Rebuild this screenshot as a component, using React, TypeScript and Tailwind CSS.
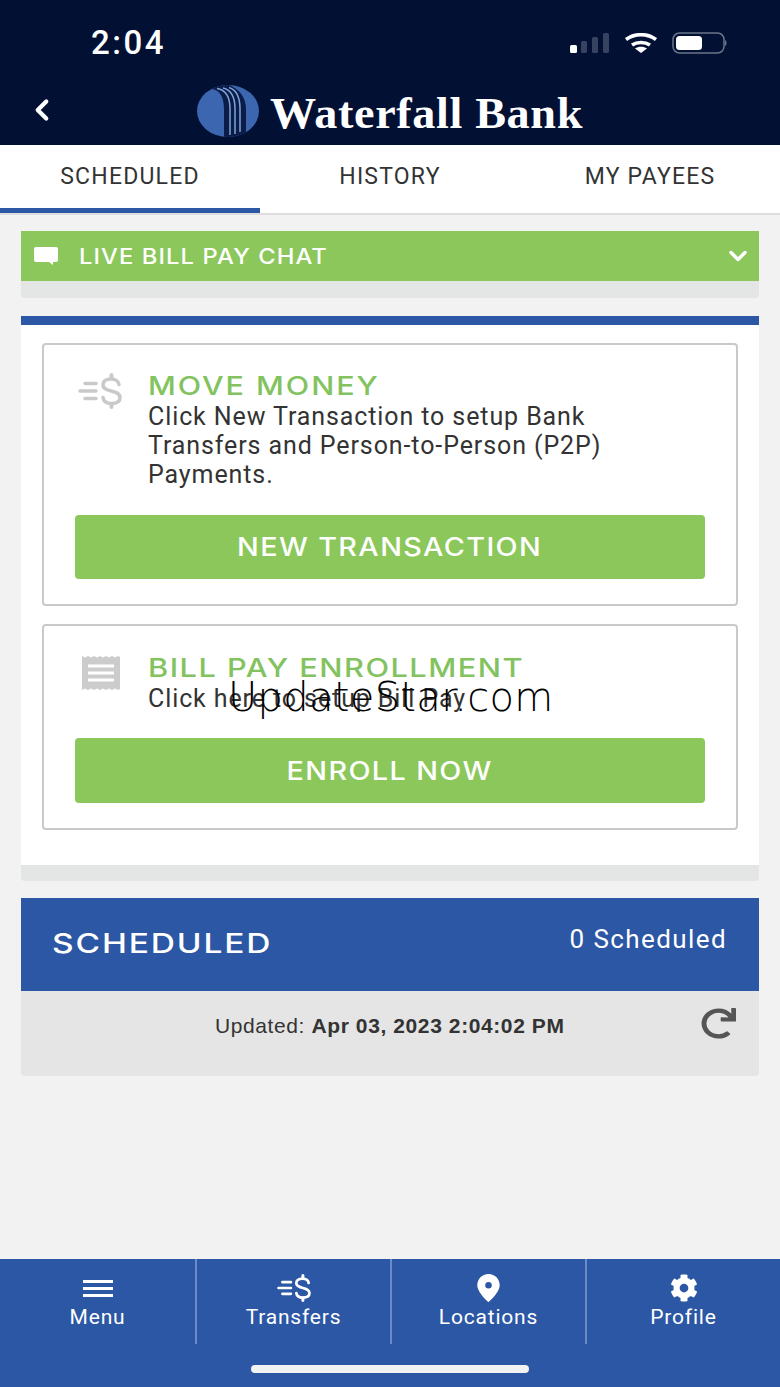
import { ChevronDown, ChevronLeft } from "lucide-react";
import { FaCog, FaRedo } from "react-icons/fa";

function TransferIcon({ className }: { className: string }) {
  return (
    <svg viewBox="0 0 44 36" className={className} fill="none" stroke="currentColor" strokeLinecap="round">
      <path d="M2 18h16M7 10.500h11M7 25.500h11" strokeWidth="3.500" />
      <path d="M41 11.500C40.500 8 37 6 33 6c-4.500 0-8 2-8 6 0 8 17 4 17 12.500 0 4-3.500 6-8.500 6-4.500 0-8-2-8.500-6" strokeWidth="3.500" />
      <path d="M33.500 2v3M33.500 31v3" strokeWidth="4" />
    </svg>
  );
}

function Logo() {
  return (
    <svg viewBox="0 0 62 52" className="h-[52px] w-[62px]">
      <defs>
        <clipPath id="logo-clip">
          <ellipse cx="31" cy="26" rx="31" ry="26" />
        </clipPath>
      </defs>
      <ellipse cx="31" cy="26" rx="31" ry="26" fill="#3c66b0" />
      <g clipPath="url(#logo-clip)" fill="none">
        <path d="M13 4C24 4 27 14 27 24v28h22V24C49 12 42 4 32 0H18Z" fill="#0b1c49" />
        <path d="M20 3.500C30 5 33 14 33 24v26M26 3C35 5 38 14 38 24v25M32 2.500C40 5 43 14 43 24v23" stroke="#7fa3d8" strokeWidth="1.500" />
      </g>
    </svg>
  );
}

function ActionCard({
  icon,
  title,
  lines,
  button,
  cardClass,
  bodyClass,
  titleClass,
  buttonClass,
}: {
  icon: React.ReactNode;
  title: string;
  lines: string[];
  button: string;
  cardClass: string;
  bodyClass: string;
  titleClass: string;
  buttonClass: string;
}) {
  return (
    <div className={`rounded border-2 border-[#c9c9c9] bg-white px-[31px] ${cardClass}`}>
      <div className={`flex ${bodyClass}`}>
        <div className="flex w-[73px] shrink-0">{icon}</div>
        <div className="min-w-0">
          <div
            className={`h-[28px] origin-left whitespace-nowrap text-[25px] leading-[28px] font-medium text-[#83c35f] [font-family:'Inter',sans-serif] ${titleClass}`}
          >
            {title}
          </div>
          <div className="pt-[2px]">
            {lines.map((line) => (
              <div key={line} className="h-[29px] whitespace-nowrap text-[25px] leading-[29px] tracking-[0.9px] text-[#333333]">
                {line}
              </div>
            ))}
          </div>
        </div>
      </div>
      <button className={`flex w-full items-center justify-center rounded bg-[#8bc75a] pt-[2px] text-white ${buttonClass}`}>
        <span className="scale-x-[1.15] whitespace-nowrap text-[25px] font-medium tracking-[1.2px] [font-family:'Inter',sans-serif]">
          {button}
        </span>
      </button>
    </div>
  );
}

export default function App() {
  const tabs = ["SCHEDULED", "HISTORY", "MY PAYEES"];

  return (
    <div className="relative flex h-[1387px] w-[780px] flex-col overflow-hidden bg-[#f2f2f2] [font-family:'Roboto',sans-serif]">
      <header className="h-[145px] shrink-0 bg-[#021033] text-white">
        <div className="flex h-[85px] items-start justify-between pl-[91px] pr-[53px] pt-[24px]">
          <span className="text-[33px] leading-[38px] font-medium tracking-[2.5px]">2:04</span>
          <div className="flex items-start pt-[9px]">
            <svg viewBox="0 0 39 20" className="h-[20px] w-[39px]">
              <rect x="0" y="12" width="7" height="8" rx="1.500" fill="#ffffff" />
              <rect x="11" y="8" width="6" height="12" rx="1.500" fill="#36425f" />
              <rect x="22" y="4" width="6" height="16" rx="1.500" fill="#36425f" />
              <rect x="33" y="0" width="6" height="20" rx="1.500" fill="#36425f" />
            </svg>
            <svg viewBox="0 0 34 20" className="ml-[15px] h-[20px] w-[34px]" fill="none" stroke="#ffffff" strokeWidth="3.500">
              <path d="M2 6.500c8.500-6.500 21.500-6.500 30 0" />
              <path d="M8 12c5-3.500 13-3.500 18 0" />
              <path d="M17 20l-6-4.500c3.500-2.500 8.500-2.500 12 0Z" fill="#ffffff" stroke="none" />
            </svg>
            <svg viewBox="0 0 55 22" className="ml-[14px] -mt-[1px] h-[22px] w-[55px]">
              <rect x="1" y="1" width="51" height="20" rx="6.500" fill="none" stroke="#6a7489" strokeWidth="1.500" />
              <rect x="4" y="4" width="26" height="14" rx="3.500" fill="#ffffff" />
              <path d="M53 8c2 .5 2 5.500 0 6Z" fill="#6a7489" />
            </svg>
          </div>
        </div>
        <div className="flex h-[60px] items-start">
          <ChevronLeft className="ml-[25px] mt-[8px] h-[34px] w-[34px]" strokeWidth={3} />
          <div className="ml-[138px] flex items-start">
            <Logo />
            <span className="ml-[11px] mt-[4px] origin-left scale-x-[1.05] whitespace-nowrap text-[44px] leading-[50px] font-bold tracking-[0.6px] [font-family:'Liberation_Serif',serif]">
              Waterfall Bank
            </span>
          </div>
        </div>
      </header>

      <nav className="flex h-[70px] shrink-0 border-b-2 border-[#dedede] bg-white">
        {tabs.map((tab, i) => (
          <div
            key={tab}
            className={`flex flex-1 items-center justify-center pb-[4px] text-[23px] tracking-[1.2px] text-[#333333] ${
              i === 0 ? "border-b-[5px] border-[#2c57a4] pt-[5px]" : ""
            }`}
          >
            {tab}
          </div>
        ))}
      </nav>

      <main className="flex flex-1 flex-col px-[21px] pt-[16px]">
        <div className="overflow-hidden rounded-b bg-[#e4e5e5] pb-[17px]">
          <div className="flex h-[50px] items-center bg-[#8bc75a] pl-[12px] pr-[7px] text-white">
            <svg viewBox="0 0 26 20" className="h-[20px] w-[26px]">
              <path d="M3 1h20a2 2 0 0 1 2 2v11a2 2 0 0 1-2 2h-3v3l-4-3H3a2 2 0 0 1-2-2V3a2 2 0 0 1 2-2Z" fill="#ffffff" />
            </svg>
            <span className="ml-[20px] flex-1 origin-left scale-x-[1.08] text-[22px] font-medium tracking-[1px] [font-family:'Inter',sans-serif]">
              LIVE BILL PAY CHAT
            </span>
            <ChevronDown className="h-[28px] w-[28px]" strokeWidth={3} />
          </div>
        </div>

        <section className="mt-[18px] overflow-hidden rounded-b bg-[#e4e5e5] pb-[16px]">
          <div className="flex flex-col gap-[18px] border-t-[9px] border-[#2c57a4] bg-white px-[21px] pb-[35px] pt-[18px]">
            <ActionCard
              icon={<TransferIcon className="ml-[3px] mt-[1px] h-[36px] w-[44px] text-[#c9c9c9]" />}
              title="MOVE MONEY"
              lines={["Click New Transaction to setup Bank", "Transfers and Person-to-Person (P2P)", "Payments."]}
              button="NEW TRANSACTION"
              cardClass="pt-[27px] pb-[25px]"
              bodyClass="h-[143px]"
              titleClass="scale-x-[1.22] tracking-[1.6px]"
              buttonClass="h-[64px]"
            />
            <ActionCard
              icon={
                <svg viewBox="0 0 38 34" className="ml-[7px] mt-[2px] h-[34px] w-[38px]">
                  <path d="M0 0l3 1.500L6 0l3 1.500L12 0l3 1.500L18 0l3 1.500L24 0l3 1.500L30 0l3 1.500L36 0l2 1v32l-2 1-3-1.500L30 34l-3-1.500L24 34l-3-1.500L18 34l-3-1.500L12 34l-3-1.500L6 34l-3-1.500L0 34Z" fill="#cccccc" />
                  <path d="M6 10h26M6 17h26M6 24h26" stroke="#ffffff" strokeWidth="3" />
                </svg>
              }
              title="BILL PAY ENROLLMENT"
              lines={["Click here to setup Bill Pay"]}
              button="ENROLL NOW"
              cardClass="pt-[28px] pb-[25px]"
              bodyClass="h-[84px]"
              titleClass="scale-x-[1.23] tracking-[1.2px]"
              buttonClass="h-[65px]"
            />
          </div>
        </section>

        <section className="mt-[17px] overflow-hidden rounded-b bg-[#e5e5e5]">
          <div className="flex h-[93px] items-start justify-between bg-[#2c57a4] pl-[31px] pr-[32px] text-white">
            <span className="mt-[29px] origin-left scale-x-[1.24] text-[27px] leading-[34px] font-medium tracking-[1.5px] [font-family:'Inter',sans-serif]">
              SCHEDULED
            </span>
            <span className="mt-[25px] text-[26px] leading-[32px] tracking-[1.4px]">0 Scheduled</span>
          </div>
          <div className="flex h-[85px] items-start pl-[194px] pr-[23px] pt-[22px]">
            <span className="flex-1 text-[21px] leading-[26px] tracking-[0.6px] text-[#333333] [font-family:'Liberation_Sans',sans-serif]">
              Updated: <span className="font-bold">Apr 03, 2023 2:04:02 PM</span>
            </span>
            <FaRedo preserveAspectRatio="none" className="-mt-[5px] h-[31px] w-[35px] text-[#555555]" />
          </div>
        </section>
      </main>

      <footer className="h-[128px] shrink-0 bg-[#2c57a4] text-white">
        <div className="flex h-[85px] text-[21px] leading-[26px] tracking-[0.8px]">
          <div className="flex w-[197px] flex-col items-center border-r-2 border-[#6a8bc4] pt-[21px]">
            <svg viewBox="0 0 30 17" className="mb-[7px] h-[17px] w-[30px]">
              <path d="M0 1.500h30M0 8.500h30M0 15.500h30" stroke="#ffffff" strokeWidth="3" />
            </svg>
            <span>Menu</span>
          </div>
          <div className="flex w-[195px] flex-col items-center border-r-2 border-[#6a8bc4] pt-[15px]">
            <TransferIcon className="mb-[2px] h-[28px] w-[34px] text-white" />
            <span>Transfers</span>
          </div>
          <div className="flex w-[195px] flex-col items-center border-r-2 border-[#6a8bc4] pt-[15px]">
            <svg viewBox="0 0 24 30" className="mb-[2px] h-[28px] w-[23px]">
              <path
                d="M12 0C5 0 0 5.500 0 12c0 8 12 18 12 18s12-10 12-18C24 5.500 19 0 12 0Zm0 8.500a3.500 3.500 0 1 1 0 7 3.500 3.500 0 0 1 0-7Z"
                fill="#ffffff"
                fillRule="evenodd"
              />
            </svg>
            <span>Locations</span>
          </div>
          <div className="flex flex-1 flex-col items-center pt-[15px]">
            <FaCog className="mb-[2px] h-[28px] w-[30px]" />
            <span>Profile</span>
          </div>
        </div>
        <div className="mx-auto mt-[21px] h-[8px] w-[278px] rounded-full bg-[#f2f2f2]" />
      </footer>

      <div className="absolute left-[228px] top-[670px] whitespace-nowrap text-[40px] leading-[54px] font-extralight tracking-[0.3px] text-black [font-family:'DejaVu_Sans',sans-serif]">
        UpdateStar.com
      </div>
    </div>
  );
}
